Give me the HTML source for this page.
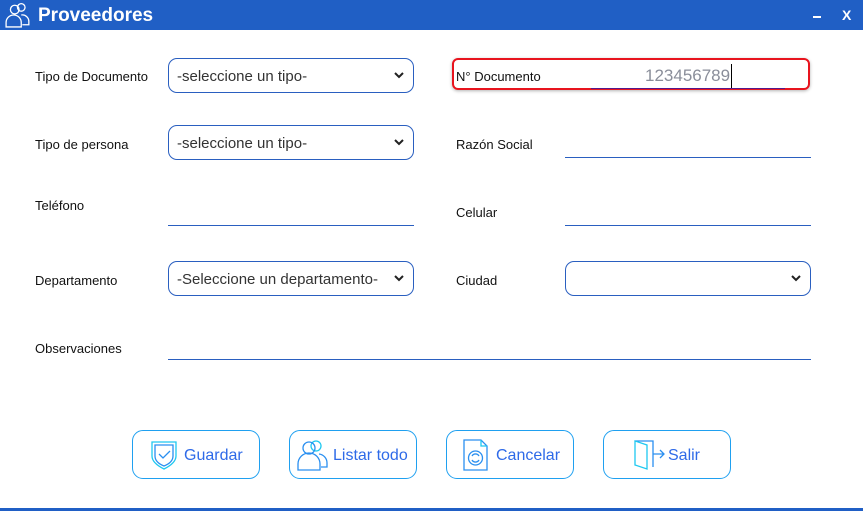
<!DOCTYPE html>
<html><head><meta charset="utf-8"><style>
*{margin:0;padding:0;box-sizing:border-box}
body{width:863px;height:511px;background:#fff;position:relative;overflow:hidden;font-family:"Liberation Sans",sans-serif;color:#111}
.bar{position:absolute;left:0;top:0;width:863px;height:30px;background:#205fc5}
.title{position:absolute;left:38px;top:5px;color:#fff;font-size:19px;font-weight:bold}
.lbl{position:absolute;font-size:13px;color:#111}
.sel{position:absolute;height:35px;border:1px solid #2a5fc0;border-radius:9px;font-size:15px;color:#333;padding:9px 0 0 8px}
.sel svg{position:absolute;right:9px;top:13px}
.line{position:absolute;height:1px;background:#2a5fc0}
.btn{position:absolute;top:430px;width:128px;height:49px;border:1px solid #1fa0f0;border-radius:11px;color:#2e6ae8;font-size:16px}
.btn span{position:absolute;top:16px}
.btn svg{position:absolute}
</style></head><body>
<div class="bar"></div>
<svg style="position:absolute;left:5px;top:2px" width="26" height="26" viewBox="0 0 24 24" fill="none" stroke="#fff" stroke-width="1.2"><circle cx="9" cy="7" r="4"/><circle cx="15" cy="5" r="3.5"/><path d="M1 23v-4a7 7 0 0 1 14 0v4z"/><path d="M15 12a6 6 0 0 1 7 6v3h-6"/></svg>
<div class="title">Proveedores</div>
<div style="position:absolute;left:813px;top:16px;width:8px;height:2px;background:#fff"></div>
<div style="position:absolute;left:842px;top:7px;color:#fff;font-weight:bold;font-size:14px">X</div>

<div class="lbl" style="left:35px;top:69px">Tipo de Documento</div>
<div class="sel" style="left:168px;top:58px;width:246px">-seleccione un tipo-<svg width="10" height="7"><path d="M1 1l4 4 4-4" stroke="#222" stroke-width="2" fill="none"/></svg></div>
<div style="position:absolute;left:452px;top:58px;width:358px;height:32px;border:2px solid #e8141e;border-radius:6px;box-shadow:0 1px 3px rgba(0,0,0,.3)"></div>
<div class="lbl" style="left:456px;top:69px">N° Documento</div>
<div style="position:absolute;left:645px;top:66px;font-size:17px;color:#8a8e9a">123456789</div>
<div style="position:absolute;left:731px;top:64px;width:1px;height:24px;background:#000"></div>
<div class="line" style="left:591px;top:88px;width:194px;background:#551a8b"></div>

<div class="lbl" style="left:35px;top:137px">Tipo de persona</div>
<div class="sel" style="left:168px;top:125px;width:246px">-seleccione un tipo-<svg width="10" height="7"><path d="M1 1l4 4 4-4" stroke="#222" stroke-width="2" fill="none"/></svg></div>
<div class="lbl" style="left:456px;top:137px">Razón Social</div>
<div class="line" style="left:565px;top:157px;width:246px"></div>

<div class="lbl" style="left:35px;top:198px">Teléfono</div>
<div class="line" style="left:168px;top:225px;width:246px"></div>
<div class="lbl" style="left:456px;top:205px">Celular</div>
<div class="line" style="left:565px;top:225px;width:246px"></div>

<div class="lbl" style="left:35px;top:273px">Departamento</div>
<div class="sel" style="left:168px;top:261px;width:246px">-Seleccione un departamento-<svg width="10" height="7"><path d="M1 1l4 4 4-4" stroke="#222" stroke-width="2" fill="none"/></svg></div>
<div class="lbl" style="left:456px;top:273px">Ciudad</div>
<div class="sel" style="left:565px;top:261px;width:246px"><svg width="10" height="7"><path d="M1 1l4 4 4-4" stroke="#222" stroke-width="2" fill="none"/></svg></div>

<div class="lbl" style="left:35px;top:341px">Observaciones</div>
<div class="line" style="left:168px;top:359px;width:643px"></div>

<div class="btn" style="left:132px"><svg style="left:18px;top:9px" width="26" height="30" viewBox="0 0 26 30" fill="none" stroke="#2a8ff0" stroke-width="1.3"><path d="M1 2h24v14c0 6-6 10-12 13C7 26 1 22 1 16z" stroke="#1ec8f0"/><path d="M4 5h18v11c0 5-4 8-9 10-5-2-9-5-9-10z"/><path d="M8 14l4 4 7-7"/></svg><span style="left:51px">Guardar</span></div>
<div class="btn" style="left:289px"><svg style="left:7px;top:8px" width="32" height="32" viewBox="0 0 32 32" fill="none" stroke="#2a8ff0" stroke-width="1.3"><circle cx="19" cy="7" r="5" stroke="#1ec8f0"/><circle cx="12" cy="9" r="6"/><path d="M1 31v-6a11 11 0 0 1 22 0v6z"/><path d="M22 15a9 9 0 0 1 8 9v4h-6"/></svg><span style="left:43px">Listar todo</span></div>
<div class="btn" style="left:446px"><svg style="left:16px;top:8px" width="26" height="32" viewBox="0 0 26 32" fill="none" stroke="#2a8ff0" stroke-width="1.3"><path d="M1 1h17l6 6v24H1z"/><path d="M18 1v6h6" stroke="#1ec8f0"/><circle cx="12.5" cy="19" r="7"/><path d="M9 17a4 4 0 0 1 7 0M16 21a4 4 0 0 1-7 0"/></svg><span style="left:49px">Cancelar</span></div>
<div class="btn" style="left:603px"><svg style="left:29px;top:9px" width="34" height="30" viewBox="0 0 34 30" fill="none" stroke="#2a8ff0" stroke-width="1.3"><path d="M2 1h18v26"/><path d="M2 1l12 4v24L2 25z" stroke="#1ec8f0"/><path d="M20 14h11M27 10l4 4-4 4"/></svg><span style="left:64px">Salir</span></div>

<div style="position:absolute;left:0;top:508px;width:863px;height:3px;background:#205fc5"></div>
</body></html>
